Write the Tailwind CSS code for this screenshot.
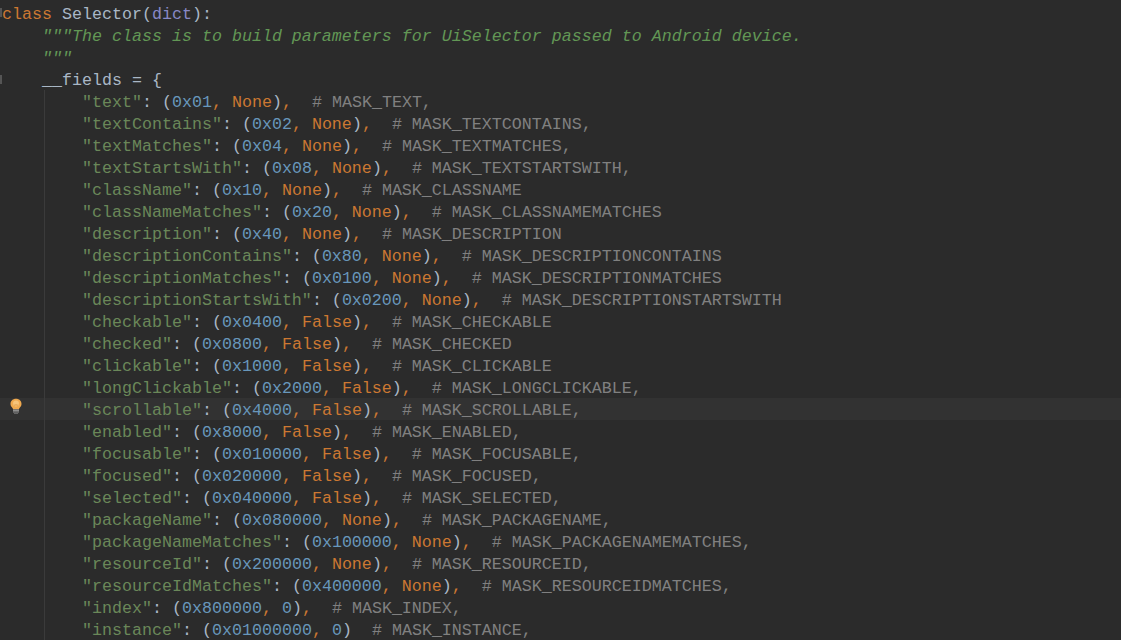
<!DOCTYPE html>
<html lang="en">
<head>
<meta charset="UTF-8">
<title>Selector</title>
<script src="https://cdn.jsdelivr.net/npm/@tailwindcss/browser@4"></script>
</head>
<body class="bg-[#2b2b2b] overflow-hidden">
<div class="relative w-[1121px] h-[640px] overflow-hidden bg-[#2b2b2b] pt-[4px] pl-[2px] font-['Liberation_Mono',monospace] text-[16.67px] leading-[22px] text-[#a9b7c6]">
  <!-- current line + gutter bits -->
  <div class="absolute left-0 right-0 top-[398px] h-[22px] bg-[#323232]"></div>
  <div class="absolute left-[44px] top-[90px] bottom-0 w-px bg-[#3b3b3b]"></div>
  <div class="absolute left-0 top-[8px] w-[2px] h-[9px] bg-[#555]"></div>
  <div class="absolute left-0 top-[75px] w-[2px] h-[9px] bg-[#555]"></div>
  <svg class="absolute left-[9px] top-[398px]" width="14" height="18" viewBox="0 0 14 18">
    <path d="M7 .8C3.800 .8 1.500 3 1.500 6c0 1.900 1 2.900 1.800 3.800.4.500.7 1 .7 1.400h6c0-.4.300-.9.700-1.400.8-.9 1.800-1.900 1.800-3.800C12.500 3 10.200 .8 7 .8z" fill="#efa94f"/>
    <circle cx="7" cy="5.500" r="3" fill="#f6c47a"/>
    <path d="M4.800 6.500l1.100 1 1.100-1 1.100 1 1.100-1" fill="none" stroke="#d58c36" stroke-width="0.7"/>
    <rect x="4" y="11.500" width="6" height="1.400" fill="#9a9a9a"/>
    <rect x="4" y="13.200" width="6" height="1.400" fill="#7f7f7f"/>
    <rect x="5" y="15" width="4" height="1" fill="#666666"/>
  </svg>
  <div class="relative flex flex-col whitespace-pre">
<div class="h-[22px]"><span class="text-[#cc7832]">class</span> Selector(<span class="text-[#8888c6]">dict</span>):</div>
<div class="h-[22px] italic text-[#629755]">    """The class is to build parameters for UiSelector passed to Android device.</div>
<div class="h-[22px] italic text-[#629755]">    """</div>
<div class="h-[22px]">    __fields = {</div>
<div class="h-[22px]">        <span class="text-[#6a8759]">"text"</span>: (<span class="text-[#6897bb]">0x01</span><span class="text-[#cc7832]">, None</span>)<span class="text-[#cc7832]">,</span>  <span class="text-[#808080]"># MASK_TEXT,</span></div>
<div class="h-[22px]">        <span class="text-[#6a8759]">"textContains"</span>: (<span class="text-[#6897bb]">0x02</span><span class="text-[#cc7832]">, None</span>)<span class="text-[#cc7832]">,</span>  <span class="text-[#808080]"># MASK_TEXTCONTAINS,</span></div>
<div class="h-[22px]">        <span class="text-[#6a8759]">"textMatches"</span>: (<span class="text-[#6897bb]">0x04</span><span class="text-[#cc7832]">, None</span>)<span class="text-[#cc7832]">,</span>  <span class="text-[#808080]"># MASK_TEXTMATCHES,</span></div>
<div class="h-[22px]">        <span class="text-[#6a8759]">"textStartsWith"</span>: (<span class="text-[#6897bb]">0x08</span><span class="text-[#cc7832]">, None</span>)<span class="text-[#cc7832]">,</span>  <span class="text-[#808080]"># MASK_TEXTSTARTSWITH,</span></div>
<div class="h-[22px]">        <span class="text-[#6a8759]">"className"</span>: (<span class="text-[#6897bb]">0x10</span><span class="text-[#cc7832]">, None</span>)<span class="text-[#cc7832]">,</span>  <span class="text-[#808080]"># MASK_CLASSNAME</span></div>
<div class="h-[22px]">        <span class="text-[#6a8759]">"classNameMatches"</span>: (<span class="text-[#6897bb]">0x20</span><span class="text-[#cc7832]">, None</span>)<span class="text-[#cc7832]">,</span>  <span class="text-[#808080]"># MASK_CLASSNAMEMATCHES</span></div>
<div class="h-[22px]">        <span class="text-[#6a8759]">"description"</span>: (<span class="text-[#6897bb]">0x40</span><span class="text-[#cc7832]">, None</span>)<span class="text-[#cc7832]">,</span>  <span class="text-[#808080]"># MASK_DESCRIPTION</span></div>
<div class="h-[22px]">        <span class="text-[#6a8759]">"descriptionContains"</span>: (<span class="text-[#6897bb]">0x80</span><span class="text-[#cc7832]">, None</span>)<span class="text-[#cc7832]">,</span>  <span class="text-[#808080]"># MASK_DESCRIPTIONCONTAINS</span></div>
<div class="h-[22px]">        <span class="text-[#6a8759]">"descriptionMatches"</span>: (<span class="text-[#6897bb]">0x0100</span><span class="text-[#cc7832]">, None</span>)<span class="text-[#cc7832]">,</span>  <span class="text-[#808080]"># MASK_DESCRIPTIONMATCHES</span></div>
<div class="h-[22px]">        <span class="text-[#6a8759]">"descriptionStartsWith"</span>: (<span class="text-[#6897bb]">0x0200</span><span class="text-[#cc7832]">, None</span>)<span class="text-[#cc7832]">,</span>  <span class="text-[#808080]"># MASK_DESCRIPTIONSTARTSWITH</span></div>
<div class="h-[22px]">        <span class="text-[#6a8759]">"checkable"</span>: (<span class="text-[#6897bb]">0x0400</span><span class="text-[#cc7832]">, False</span>)<span class="text-[#cc7832]">,</span>  <span class="text-[#808080]"># MASK_CHECKABLE</span></div>
<div class="h-[22px]">        <span class="text-[#6a8759]">"checked"</span>: (<span class="text-[#6897bb]">0x0800</span><span class="text-[#cc7832]">, False</span>)<span class="text-[#cc7832]">,</span>  <span class="text-[#808080]"># MASK_CHECKED</span></div>
<div class="h-[22px]">        <span class="text-[#6a8759]">"clickable"</span>: (<span class="text-[#6897bb]">0x1000</span><span class="text-[#cc7832]">, False</span>)<span class="text-[#cc7832]">,</span>  <span class="text-[#808080]"># MASK_CLICKABLE</span></div>
<div class="h-[22px]">        <span class="text-[#6a8759]">"longClickable"</span>: (<span class="text-[#6897bb]">0x2000</span><span class="text-[#cc7832]">, False</span>)<span class="text-[#cc7832]">,</span>  <span class="text-[#808080]"># MASK_LONGCLICKABLE,</span></div>
<div class="h-[22px]">        <span class="text-[#6a8759]">"scrollable"</span>: (<span class="text-[#6897bb]">0x4000</span><span class="text-[#cc7832]">, False</span>)<span class="text-[#cc7832]">,</span>  <span class="text-[#808080]"># MASK_SCROLLABLE,</span></div>
<div class="h-[22px]">        <span class="text-[#6a8759]">"enabled"</span>: (<span class="text-[#6897bb]">0x8000</span><span class="text-[#cc7832]">, False</span>)<span class="text-[#cc7832]">,</span>  <span class="text-[#808080]"># MASK_ENABLED,</span></div>
<div class="h-[22px]">        <span class="text-[#6a8759]">"focusable"</span>: (<span class="text-[#6897bb]">0x010000</span><span class="text-[#cc7832]">, False</span>)<span class="text-[#cc7832]">,</span>  <span class="text-[#808080]"># MASK_FOCUSABLE,</span></div>
<div class="h-[22px]">        <span class="text-[#6a8759]">"focused"</span>: (<span class="text-[#6897bb]">0x020000</span><span class="text-[#cc7832]">, False</span>)<span class="text-[#cc7832]">,</span>  <span class="text-[#808080]"># MASK_FOCUSED,</span></div>
<div class="h-[22px]">        <span class="text-[#6a8759]">"selected"</span>: (<span class="text-[#6897bb]">0x040000</span><span class="text-[#cc7832]">, False</span>)<span class="text-[#cc7832]">,</span>  <span class="text-[#808080]"># MASK_SELECTED,</span></div>
<div class="h-[22px]">        <span class="text-[#6a8759]">"packageName"</span>: (<span class="text-[#6897bb]">0x080000</span><span class="text-[#cc7832]">, None</span>)<span class="text-[#cc7832]">,</span>  <span class="text-[#808080]"># MASK_PACKAGENAME,</span></div>
<div class="h-[22px]">        <span class="text-[#6a8759]">"packageNameMatches"</span>: (<span class="text-[#6897bb]">0x100000</span><span class="text-[#cc7832]">, None</span>)<span class="text-[#cc7832]">,</span>  <span class="text-[#808080]"># MASK_PACKAGENAMEMATCHES,</span></div>
<div class="h-[22px]">        <span class="text-[#6a8759]">"resourceId"</span>: (<span class="text-[#6897bb]">0x200000</span><span class="text-[#cc7832]">, None</span>)<span class="text-[#cc7832]">,</span>  <span class="text-[#808080]"># MASK_RESOURCEID,</span></div>
<div class="h-[22px]">        <span class="text-[#6a8759]">"resourceIdMatches"</span>: (<span class="text-[#6897bb]">0x400000</span><span class="text-[#cc7832]">, None</span>)<span class="text-[#cc7832]">,</span>  <span class="text-[#808080]"># MASK_RESOURCEIDMATCHES,</span></div>
<div class="h-[22px]">        <span class="text-[#6a8759]">"index"</span>: (<span class="text-[#6897bb]">0x800000</span><span class="text-[#cc7832]">, </span><span class="text-[#6897bb]">0</span>)<span class="text-[#cc7832]">,</span>  <span class="text-[#808080]"># MASK_INDEX,</span></div>
<div class="h-[22px]">        <span class="text-[#6a8759]">"instance"</span>: (<span class="text-[#6897bb]">0x01000000</span><span class="text-[#cc7832]">, </span><span class="text-[#6897bb]">0</span>)  <span class="text-[#808080]"># MASK_INSTANCE,</span></div>
  </div>
</div>
</body>
</html>
